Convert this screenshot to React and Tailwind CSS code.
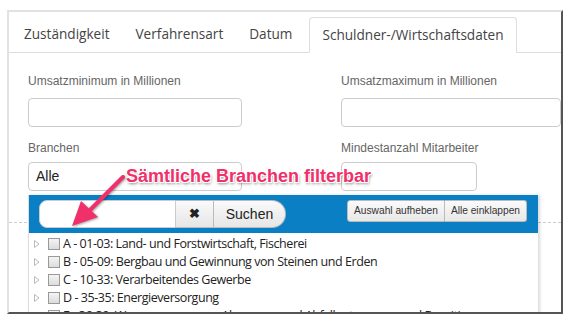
import React from 'react';

const tabs = ['Zuständigkeit', 'Verfahrensart', 'Datum'];

const branches = [
    'A - 01-03: Land- und Forstwirtschaft, Fischerei',
    'B - 05-09: Bergbau und Gewinnung von Steinen und Erden',
    'C - 10-33: Verarbeitendes Gewerbe',
    'D - 35-35: Energieversorgung',
    'E - 36-39: Wasserversorgung; Abwasser- und Abfallentsorgung und Beseitigung von',
];

const Field = ({ label, width }) => (
    <div>
        <div className="text-[12px] leading-[17px] text-[#666] mb-[8px]">{label}</div>
        <div className={`${width} h-[29px] rounded-[4px] border border-[#ccc] bg-white`}></div>
    </div>
);

const App = () => {
    return (
        <div className="w-[570px] h-[326px] bg-white pt-[10px] pl-[7px]" style={{ fontFamily: '"Liberation Sans", Arial, sans-serif' }}>
            <div className="relative w-[556px] h-[304px] border-t-2 border-l-2 border-t-[#e2e2e2] border-l-[#e2e2e2] border-r-2 border-b-2 border-r-[#555] border-b-[#555] overflow-hidden">
                {/* tabs */}
                <ul className="flex mt-[5px] border-b border-[#ddd] pl-[2px]" style={{ fontFamily: '"Open Sans", sans-serif' }}>
                    {tabs.map((t) => (
                        <li key={t} className="px-[13px] h-[35px] flex items-center text-[13.6px] text-[#444]">{t}</li>
                    ))}
                    <li className="px-[12px] h-[36px] -mb-px flex items-center text-[13.6px] text-[#444] bg-white border border-[#ddd] border-b-white rounded-t-[4px] ml-[4px]">
                        Schuldner-/Wirtschaftsdaten
                    </li>
                </ul>

                {/* form */}
                <div className="grid grid-cols-[313px_1fr] pl-[19px] pt-[20px]">
                    <Field label="Umsatzminimum in Millionen" width="w-[214px]" />
                    <Field label="Umsatzmaximum in Millionen" width="w-[220px]" />
                    <div className="mt-[13px]">
                        <div className="text-[12px] leading-[17px] text-[#666] mb-[5px]">Branchen</div>
                        <div className="w-[214px] h-[29px] rounded-[4px] border border-[#ccc] bg-white flex items-center px-[7px] text-[14px] text-[#222]">Alle</div>
                    </div>
                    <div className="mt-[13px]">
                        <div className="text-[12px] leading-[17px] text-[#666] mb-[5px]">Mindestanzahl Mitarbeiter</div>
                        <div className="w-[136px] h-[29px] rounded-[4px] border border-[#ccc] bg-white"></div>
                    </div>
                </div>

                {/* dashed divider behind dropdown */}
                <div className="mt-[31px] border-t border-dashed border-[#ccc]"></div>

                {/* dropdown */}
                <div className="absolute left-[19px] top-[183px] w-[510px] bg-white shadow-[2px_0_3px_rgba(0,0,0,0.15)] border-l border-[#ddd]">
                    <div className="h-[38px] bg-[#0a7fc3] flex items-center justify-between pl-[10px] pr-[11px]">
                        <div className="flex h-[28px]">
                            <div className="w-[137px] bg-white rounded-l-[8px] border border-[#ccc]"></div>
                            <div className="w-[38px] flex items-center justify-center border-y border-r border-[#bbb] bg-gradient-to-b from-[#fafafa] to-[#e6e6e6] text-[13px] font-bold text-[#222]">✖</div>
                            <div className="w-[72px] flex items-center justify-center border-y border-r border-[#bbb] rounded-r-[14px] bg-gradient-to-b from-[#fafafa] to-[#e6e6e6] text-[14px] text-[#222]">Suchen</div>
                        </div>
                        <div className="flex h-[22px] mt-[-6px] text-[10.2px] text-[#333]">
                            <div className="px-[6px] flex items-center border border-[#bbb] rounded-l-[3px] bg-gradient-to-b from-[#fafafa] to-[#e8e8e8]">Auswahl aufheben</div>
                            <div className="px-[6px] flex items-center border-y border-r border-[#bbb] rounded-r-[3px] bg-gradient-to-b from-[#fafafa] to-[#e8e8e8]">Alle einklappen</div>
                        </div>
                    </div>
                    <div className="pt-[2px] pl-[4px]" style={{ fontFamily: '"Open Sans", sans-serif' }}>
                        {branches.map((b) => (
                            <div key={b} className="flex items-center h-[18px] whitespace-nowrap">
                                <svg width="8" height="10" viewBox="0 0 8 10" className="mr-[7px]">
                                    <path d="M1.5 1.5 L6 5 L1.5 8.5 Z" fill="none" stroke="#bbb" strokeWidth="1" />
                                </svg>
                                <div className="w-[12px] h-[12px] border border-[#999] bg-gradient-to-b from-[#f4f4f4] to-[#dcdcdc] mr-[3px]"></div>
                                <span className="text-[12.5px] tracking-[-0.45px] text-[#222]">{b}</span>
                            </div>
                        ))}
                    </div>
                </div>

                {/* annotation */}
                <div className="absolute left-[117px] top-[151px] text-[18px] font-bold text-[#f0306b] [text-shadow:1px_1px_0_#fff,-1px_-1px_0_#fff,1px_-1px_0_#fff,-1px_1px_0_#fff,1px_2px_3px_rgba(0,0,0,0.5)]">
                    Sämtliche Branchen filterbar
                </div>
                <svg className="absolute left-0 top-0" width="556" height="304" style={{ pointerEvents: 'none' }}>
                    <g style={{ filter: 'drop-shadow(1px 1px 1px rgba(0,0,0,0.35))' }}>
                        <line x1="114" y1="165" x2="76" y2="203" stroke="#f0306b" strokeWidth="4" strokeLinecap="round" />
                        <polygon points="63,214 72,189 89,205" fill="#f0306b" />
                    </g>
                </svg>
            </div>
        </div>
    );
};

export default App;
